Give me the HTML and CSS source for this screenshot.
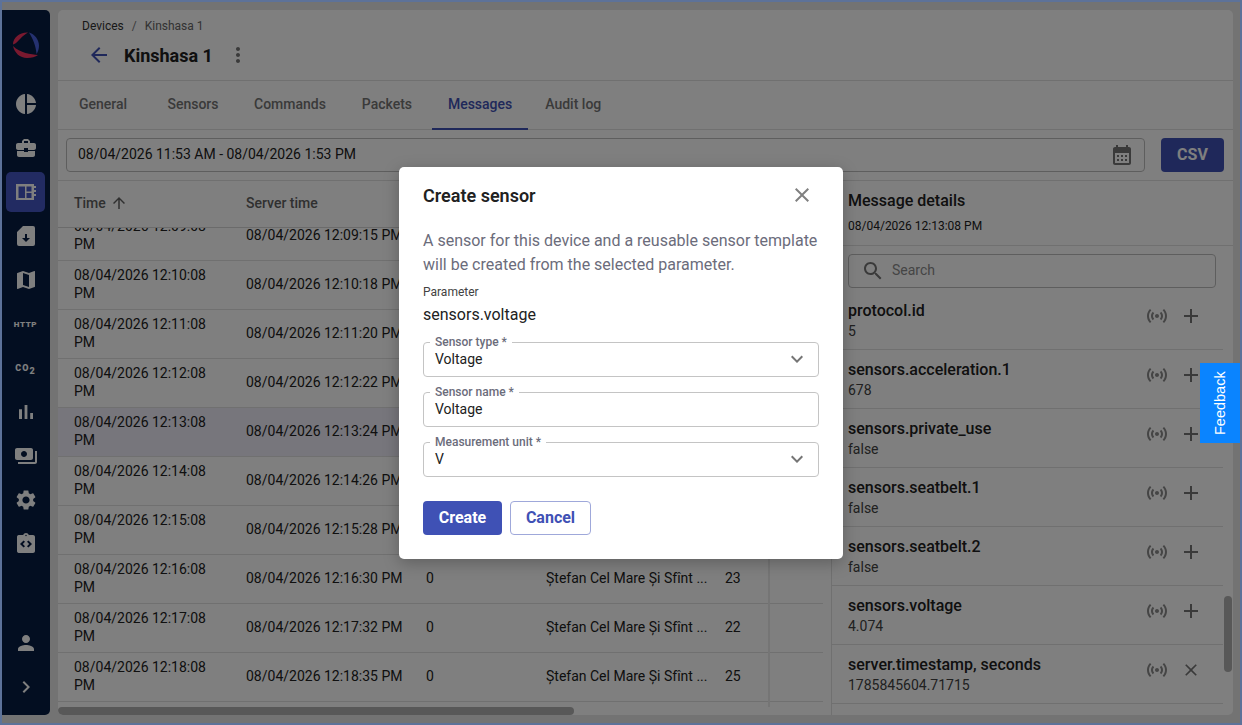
FILE: index.html
```html
<!DOCTYPE html>
<html lang="en">
<head>
  <meta charset="UTF-8">
  <meta name="viewport" content="width=device-width, initial-scale=1.0">
  <title>Kinshasa 1 - Messages</title>
  <link rel="stylesheet" href="styles.css">
</head>
<body>
  <svg class="icon-defs" aria-hidden="true">
    <symbol id="i-pie" viewBox="0 0 24 24"><path d="M11 2v20c-5.07-.5-9-4.79-9-10s3.93-9.5 9-10zm2.03 0v8.99H22c-.47-4.74-4.24-8.52-8.97-8.99zm0 11.01V22c4.74-.47 8.5-4.25 8.97-8.99h-8.97z"/></symbol>
    <symbol id="i-case" viewBox="0 0 24 24"><path d="M10 16v-1H3.01L3 19c0 1.11.89 2 2 2h14c1.11 0 2-.89 2-2v-4h-7v1h-4zm10-9h-4.01V5l-2-2h-4l-2 2v2H4c-1.1 0-2 .9-2 2v3c0 1.11.89 2 2 2h6v-2h4v2h6c1.1 0 2-.9 2-2V9c0-1.1-.9-2-2-2zm-6 0h-4V5h4v2z"/></symbol>
    <symbol id="i-board" viewBox="0 0 24 24"><path fill-rule="evenodd" d="M2 4h18v2h2v2h-2v2h2v2h-2v2h2v2h-2v4H2zM4.500 6.500V18H11V6.500zm8 0v5h5v-5zm0 6.500v5h5v-5z"/></symbol>
    <symbol id="i-file" viewBox="0 0 24 24"><path fill-rule="evenodd" d="M9 2h10a2 2 0 0 1 2 2v16a2 2 0 0 1-2 2H5a2 2 0 0 1-2-2V8zm2 8v4H8l4 4 4-4h-3v-4z"/></symbol>
    <symbol id="i-map" viewBox="0 0 24 24"><path d="M20.500 3l-.16.03L15 5.100 9 3 3.360 4.900c-.21.07-.36.25-.36.48V20.500c0 .28.22.5.5.5l.16-.03L9 18.900l6 2.100 5.640-1.900c.21-.07.36-.25.36-.48V3.500c0-.28-.22-.5-.5-.5zM15 19l-6-2.110V5l6 2.110V19z"/></symbol>
    <symbol id="i-bars" viewBox="0 0 24 24"><path d="M5 9.200h3V19H5zM10.600 5h2.800v14h-2.800zm5.600 8H19v6h-2.800z"/></symbol>
    <symbol id="i-pay" viewBox="0 0 24 24"><path d="M19 14V6c0-1.100-.9-2-2-2H3c-1.100 0-2 .9-2 2v8c0 1.100.9 2 2 2h14c1.100 0 2-.9 2-2zm-9-1c-1.660 0-3-1.340-3-3s1.340-3 3-3 3 1.340 3 3-1.340 3-3 3zm13-6v11c0 1.100-.9 2-2 2H4v-2h17V7h2z"/></symbol>
    <symbol id="i-gear" viewBox="0 0 24 24"><path d="M19.140 12.940c.04-.3.06-.61.06-.94 0-.32-.02-.64-.07-.94l2.030-1.580c.18-.14.23-.41.12-.61l-1.920-3.320c-.12-.22-.37-.29-.59-.22l-2.390.96c-.5-.38-1.030-.7-1.620-.94l-.36-2.540c-.04-.24-.24-.41-.48-.41h-3.840c-.24 0-.43.17-.47.41l-.36 2.540c-.59.24-1.130.57-1.620.94l-2.390-.96c-.22-.08-.47 0-.59.22L2.740 8.870c-.12.21-.08.47.12.61l2.030 1.580c-.05.3-.09.63-.09.94s.02.64.07.94l-2.030 1.580c-.18.14-.23.41-.12.61l1.920 3.320c.12.22.37.29.59.22l2.390-.96c.5.38 1.030.7 1.620.94l.36 2.540c.05.24.24.41.48.41h3.840c.24 0 .44-.17.47-.41l.36-2.540c.59-.24 1.130-.56 1.620-.94l2.390.96c.22.08.47 0 .59-.22l1.920-3.320c.12-.22.07-.47-.12-.61l-2.010-1.580zM12 15.600c-1.980 0-3.600-1.620-3.600-3.600s1.620-3.600 3.600-3.600 3.600 1.620 3.600 3.600-1.620 3.600-3.600 3.600z"/></symbol>
    <symbol id="i-code" viewBox="0 0 24 24"><path d="M19 3h-4.180C14.400 1.840 13.300 1 12 1s-2.400.84-2.820 2H5c-.14 0-.27.01-.4.04-.39.08-.74.28-1.010.55-.18.18-.33.4-.43.64-.1.23-.16.49-.16.77v14c0 .27.06.54.16.78s.25.45.43.64c.27.27.62.47 1.010.55.13.02.26.03.4.03h14c1.100 0 2-.9 2-2V5c0-1.100-.9-2-2-2zm-8 11.170-1.410 1.420L6 12l3.590-3.590L11 9.830 8.830 12 11 14.170zm1-9.920c-.41 0-.75-.34-.75-.75s.34-.75.75-.75.75.34.75.75-.34.75-.75.75zm1 9.920L15.170 12 13 9.830l1.410-1.420L18 12l-3.590 3.590L13 14.170z"/></symbol>
    <symbol id="i-user" viewBox="0 0 24 24"><path d="M12 12c2.210 0 4-1.790 4-4s-1.790-4-4-4-4 1.790-4 4 1.790 4 4 4zm0 2c-2.670 0-8 1.340-8 4v2h16v-2c0-2.660-5.330-4-8-4z"/></symbol>
    <symbol id="i-right" viewBox="0 0 24 24"><path d="M10 6L8.590 7.410 13.170 12l-4.580 4.590L10 18l6-6z"/></symbol>
    <symbol id="i-back" viewBox="0 0 24 24"><path d="M20 11H7.830l5.590-5.590L12 4l-8 8 8 8 1.410-1.410L7.830 13H20v-2z"/></symbol>
    <symbol id="i-more" viewBox="0 0 24 24"><path d="M12 8c1.100 0 2-.9 2-2s-.9-2-2-2-2 .9-2 2 .9 2 2 2zm0 2c-1.100 0-2 .9-2 2s.9 2 2 2 2-.9 2-2-.9-2-2-2zm0 6c-1.100 0-2 .9-2 2s.9 2 2 2 2-.9 2-2-.9-2-2-2z"/></symbol>
    <symbol id="i-up" viewBox="0 0 24 24"><path d="M4 12l1.410 1.410L11 7.830V20h2V7.830l5.580 5.590L20 12l-8-8-8 8z"/></symbol>
    <symbol id="i-cal" viewBox="0 0 24 24"><path d="M19 4h-1V2h-2v2H8V2H6v2H5c-1.100 0-2 .9-2 2v14c0 1.100.9 2 2 2h14c1.100 0 2-.9 2-2V6c0-1.100-.9-2-2-2zm0 16H5V10h14v10zM9 14H7v-2h2v2zm4 0h-2v-2h2v2zm4 0h-2v-2h2v2zm-8 4H7v-2h2v2zm4 0h-2v-2h2v2zm4 0h-2v-2h2v2z"/></symbol>
    <symbol id="i-close" viewBox="0 0 24 24"><path d="M19 6.410L17.590 5 12 10.590 6.410 5 5 6.410 10.590 12 5 17.590 6.410 19 12 13.410 17.590 19 19 17.590 13.410 12z"/></symbol>
    <symbol id="i-plus" viewBox="0 0 24 24"><path d="M19 13h-6v6h-2v-6H5v-2h6V5h2v6h6v2z"/></symbol>
    <symbol id="i-search" viewBox="0 0 24 24"><path d="M15.500 14h-.79l-.28-.27C15.410 12.590 16 11.110 16 9.500 16 5.910 13.090 3 9.500 3S3 5.910 3 9.500 5.910 16 9.500 16c1.610 0 3.090-.59 4.230-1.570l.27.28v.79l5 4.990L20.490 19l-4.990-5zm-6 0C7.010 14 5 11.990 5 9.500S7.010 5 9.500 5 14 7.010 14 9.500 11.990 14 9.500 14z"/></symbol>
    <symbol id="i-signal" viewBox="0 0 24 24"><path d="M7.760 16.240C6.670 15.160 6 13.660 6 12s.67-3.160 1.760-4.240l1.420 1.420C8.450 9.900 8 10.900 8 12c0 1.100.45 2.100 1.170 2.830l-1.410 1.410zm8.480 0C17.330 15.160 18 13.660 18 12s-.67-3.160-1.760-4.240l-1.420 1.420C15.550 9.900 16 10.900 16 12c0 1.100-.45 2.100-1.170 2.830l1.410 1.410zM12 10c-1.100 0-2 .9-2 2s.9 2 2 2 2-.9 2-2-.9-2-2-2zm8 2c0 2.210-.9 4.210-2.350 5.650l1.420 1.420C20.880 17.260 22 14.760 22 12s-1.120-5.260-2.930-7.070l-1.420 1.420C19.100 7.790 20 9.790 20 12zM6.350 6.350L4.930 4.930C3.120 6.740 2 9.240 2 12s1.120 5.260 2.930 7.070l1.420-1.420C4.900 16.210 4 14.210 4 12s.9-4.210 2.350-5.650z"/></symbol>
    <symbol id="i-down" viewBox="0 0 24 24"><path d="M16.590 8.590L12 13.170 7.410 8.590 6 10l6 6 6-6z"/></symbol>
  </svg>

  <div class="app">
    <nav class="sidebar">
      <div class="logo">
        <svg width="28" height="28" viewBox="0 0 28 28">
          <path class="logo-red" d="M16 1.500C8 1 1 6.500 1 13.500c3.500-1 5-3.500 7.500-6 2-2.500 5-4.500 7.500-6z"/>
          <path class="logo-red" d="M1 15c1.500 7 7 12 14 12 4.500 0 8.500-1 11-3-7-.5-18-2-25-9z"/>
          <path class="logo-blue" d="M17 1.500c5.500 1.500 10 7 10 13 0 3.500-1 6.500-2.500 8.500-.5-8-3.500-15-7.500-21.500z"/>
        </svg>
      </div>
      <a class="nav-item"><svg class="icon"><use href="#i-pie"/></svg></a>
      <a class="nav-item"><svg class="icon"><use href="#i-case"/></svg></a>
      <a class="nav-item active"><svg class="icon"><use href="#i-board"/></svg></a>
      <a class="nav-item"><svg class="icon"><use href="#i-file"/></svg></a>
      <a class="nav-item"><svg class="icon"><use href="#i-map"/></svg></a>
      <a class="nav-item nav-text">HTTP</a>
      <a class="nav-item nav-text co2"><span>CO<sub>2</sub></span></a>
      <a class="nav-item"><svg class="icon"><use href="#i-bars"/></svg></a>
      <a class="nav-item"><svg class="icon"><use href="#i-pay"/></svg></a>
      <a class="nav-item"><svg class="icon"><use href="#i-gear"/></svg></a>
      <a class="nav-item"><svg class="icon"><use href="#i-code"/></svg></a>
      <a class="nav-item push"><svg class="icon"><use href="#i-user"/></svg></a>
      <a class="nav-item"><svg class="icon"><use href="#i-right"/></svg></a>
    </nav>

    <main class="panel">
      <header class="page-head">
        <div class="crumbs"><span>Devices</span><i>/</i><span class="crumb-last">Kinshasa 1</span></div>
        <div class="title-row">
          <svg class="icon back"><use href="#i-back"/></svg>
          <h1>Kinshasa 1</h1>
          <svg class="icon more"><use href="#i-more"/></svg>
        </div>
      </header>

      <div class="tabs">
        <a class="tab">General</a>
        <a class="tab">Sensors</a>
        <a class="tab">Commands</a>
        <a class="tab">Packets</a>
        <a class="tab current">Messages</a>
        <a class="tab">Audit log</a>
      </div>

      <div class="filter-row">
        <div class="date-input">
          <span>08/04/2026 11:53 AM - 08/04/2026 1:53 PM</span>
          <svg class="icon"><use href="#i-cal"/></svg>
        </div>
        <button class="csv-btn">CSV</button>
      </div>

      <div class="content">
        <section class="table-pane">
          <div class="row table-head">
            <div class="cell">Time <svg class="sort"><use href="#i-up"/></svg></div>
            <div class="cell">Server time</div>
          </div>
          <div class="table-body">
            <div class="row first"><div class="cell">08/04/2026 12:09:08 PM</div><div class="cell">08/04/2026 12:09:15 PM</div></div>
            <div class="row"><div class="cell">08/04/2026 12:10:08 PM</div><div class="cell">08/04/2026 12:10:18 PM</div></div>
            <div class="row"><div class="cell">08/04/2026 12:11:08 PM</div><div class="cell">08/04/2026 12:11:20 PM</div></div>
            <div class="row"><div class="cell">08/04/2026 12:12:08 PM</div><div class="cell">08/04/2026 12:12:22 PM</div></div>
            <div class="row selected"><div class="cell">08/04/2026 12:13:08 PM</div><div class="cell">08/04/2026 12:13:24 PM</div></div>
            <div class="row"><div class="cell">08/04/2026 12:14:08 PM</div><div class="cell">08/04/2026 12:14:26 PM</div></div>
            <div class="row"><div class="cell">08/04/2026 12:15:08 PM</div><div class="cell">08/04/2026 12:15:28 PM</div></div>
            <div class="row"><div class="cell">08/04/2026 12:16:08 PM</div><div class="cell">08/04/2026 12:16:30 PM</div><div class="cell">0</div><div class="cell clip">Ștefan Cel Mare Și Sfînt ...</div><div class="cell">23</div></div>
            <div class="row"><div class="cell">08/04/2026 12:17:08 PM</div><div class="cell">08/04/2026 12:17:32 PM</div><div class="cell">0</div><div class="cell clip">Ștefan Cel Mare Și Sfînt ...</div><div class="cell">22</div></div>
            <div class="row"><div class="cell">08/04/2026 12:18:08 PM</div><div class="cell">08/04/2026 12:18:35 PM</div><div class="cell">0</div><div class="cell clip">Ștefan Cel Mare Și Sfînt ...</div><div class="cell">25</div></div>
          </div>
          <div class="col-line"></div>
          <div class="thumb-h"></div>
        </section>

        <aside class="details">
          <div class="details-head">
            <h2>Message details</h2>
            <div class="details-date">08/04/2026 12:13:08 PM</div>
          </div>
          <div class="search">
            <svg class="icon"><use href="#i-search"/></svg>
            <span>Search</span>
          </div>
          <div class="param-list">
            <div class="param"><div class="param-text"><b>protocol.id</b><span>5</span></div><svg class="icon"><use href="#i-signal"/></svg><svg class="icon"><use href="#i-plus"/></svg></div>
            <div class="param"><div class="param-text"><b>sensors.acceleration.1</b><span>678</span></div><svg class="icon"><use href="#i-signal"/></svg><svg class="icon"><use href="#i-plus"/></svg></div>
            <div class="param"><div class="param-text"><b>sensors.private_use</b><span>false</span></div><svg class="icon"><use href="#i-signal"/></svg><svg class="icon"><use href="#i-plus"/></svg></div>
            <div class="param"><div class="param-text"><b>sensors.seatbelt.1</b><span>false</span></div><svg class="icon"><use href="#i-signal"/></svg><svg class="icon"><use href="#i-plus"/></svg></div>
            <div class="param"><div class="param-text"><b>sensors.seatbelt.2</b><span>false</span></div><svg class="icon"><use href="#i-signal"/></svg><svg class="icon"><use href="#i-plus"/></svg></div>
            <div class="param"><div class="param-text"><b>sensors.voltage</b><span>4.074</span></div><svg class="icon"><use href="#i-signal"/></svg><svg class="icon"><use href="#i-plus"/></svg></div>
            <div class="param"><div class="param-text"><b>server.timestamp, seconds</b><span>1785845604.71715</span></div><svg class="icon"><use href="#i-signal"/></svg><svg class="icon remove"><use href="#i-close"/></svg></div>
          </div>
          <div class="thumb-v"></div>
        </aside>
      </div>
    </main>

    <div class="overlay">
      <div class="modal">
        <div class="modal-head">
          <h3>Create sensor</h3>
          <svg class="icon"><use href="#i-close"/></svg>
        </div>
        <p class="modal-desc">A sensor for this device and a reusable sensor template will be created from the selected parameter.</p>
        <div class="param-label">Parameter</div>
        <div class="param-value">sensors.voltage</div>
        <fieldset class="field">
          <legend>Sensor type *</legend>
          <div class="field-row"><span>Voltage</span><svg class="icon"><use href="#i-down"/></svg></div>
        </fieldset>
        <fieldset class="field">
          <legend>Sensor name *</legend>
          <div class="field-row"><span>Voltage</span></div>
        </fieldset>
        <fieldset class="field">
          <legend>Measurement unit *</legend>
          <div class="field-row"><span>V</span><svg class="icon"><use href="#i-down"/></svg></div>
        </fieldset>
        <div class="modal-actions">
          <button class="btn primary">Create</button>
          <button class="btn outline">Cancel</button>
        </div>
      </div>
    </div>

    <button class="feedback">Feedback</button>
  </div>
</body>
</html>
```

FILE: styles.css
```css
* {
  box-sizing: border-box;
}
html, body {
  margin: 0;
  padding: 0;
  height: 100%;
  overflow: hidden;
}
body {
  font-family: Roboto, "Liberation Sans", sans-serif;
  font-size: 14px;
  color: #212121;
}
.icon-defs {
  display: none;
}
.icon {
  width: 24px;
  height: 24px;
  flex: none;
  fill: currentColor;
}

/* shell */
.app {
  position: relative;
  display: flex;
  gap: 8px;
  height: 725px;
  padding: 8px 7px 8px 0;
  border: 2px solid #5d7299;
  background-color: #e6e6e6;
}
.sidebar {
  width: 48px;
  flex: none;
  display: flex;
  flex-direction: column;
  gap: 4px;
  padding: 0 5px 8px 4px;
  background-color: #061c42;
  border-radius: 0 5px 5px 0;
  color: #fff;
}
.logo {
  height: 70px;
  display: flex;
  align-items: center;
  justify-content: center;
}
.logo-red {
  fill: #f5335f;
}
.logo-blue {
  fill: #4a62e0;
}
.nav-item {
  height: 40px;
  flex: none;
  display: flex;
  align-items: center;
  justify-content: center;
  border-radius: 5px;
}
.nav-item.active {
  background-color: #4557c4;
}
.nav-item.push {
  margin-top: auto;
}
.nav-text {
  font-size: 8px;
  font-weight: 900;
  letter-spacing: 0.6px;
}
.nav-text.co2 {
  font-size: 9px;
  letter-spacing: 1px;
}
.nav-text sub {
  font-size: 9px;
  line-height: 0;
}

/* main panel */
.panel {
  flex: 1;
  min-width: 0;
  display: flex;
  flex-direction: column;
  background-color: #fff;
  border-radius: 5px;
  overflow: hidden;
}
.page-head {
  height: 71px;
  flex: none;
  padding: 9px 0 0 24px;
  border-bottom: 1px solid #e0e0e0;
}
.crumbs {
  display: flex;
  gap: 8px;
  font-size: 12px;
  line-height: 14px;
  color: #333;
}
.crumbs i {
  font-style: normal;
  color: #777;
}
.crumb-last {
  color: #666;
}
.title-row {
  display: flex;
  align-items: center;
  margin-top: 6px;
  height: 32px;
}
.back {
  margin-left: 5px;
  color: #3f51b5;
}
.title-row h1 {
  margin: 0 13px 0 13px;
  font-size: 18px;
  font-weight: 700;
  color: #212121;
}
.more {
  color: #757575;
}
.tabs {
  height: 49px;
  flex: none;
  display: flex;
  border-bottom: 1px solid #e0e0e0;
}
.tab {
  min-width: 90px;
  padding: 0 16px 2px;
  display: flex;
  align-items: center;
  justify-content: center;
  font-weight: 500;
  color: #757575;
  margin-bottom: -1px;
  border-bottom: 2px solid transparent;
}
.tab.current {
  color: #3f51b5;
  border-bottom-color: #3f51b5;
}
.filter-row {
  height: 51px;
  flex: none;
  display: flex;
  gap: 16px;
  padding: 8px 9px 8px 8px;
  border-bottom: 1px solid #e0e0e0;
}
.date-input {
  flex: 1;
  display: flex;
  align-items: center;
  justify-content: space-between;
  padding: 0 10px 0 11px;
  border: 1px solid #bdbdbd;
  border-radius: 4px;
}
.date-input span {
  margin-bottom: 2px;
}
.date-input .icon {
  color: #757575;
}
.csv-btn {
  width: 63px;
  padding: 0 0 2px;
  border: none;
  border-radius: 4px;
  background-color: #3f51b5;
  color: #fff;
  font: 700 16px Roboto, sans-serif;
}

/* messages table */
.content {
  flex: 1;
  min-height: 0;
  display: flex;
}
.table-pane {
  position: relative;
  width: 774px;
  flex: none;
  display: flex;
  flex-direction: column;
  border-right: 1px solid #e0e0e0;
  overflow: hidden;
}
.row {
  display: grid;
  grid-template-columns: 172px 180px 120px 179px 60px;
  align-items: center;
  width: 765px;
  height: 49px;
  flex: none;
  padding-bottom: 2px;
  border-bottom: 1px solid #e0e0e0;
  line-height: 18.4px;
}
.cell {
  padding: 0 16px;
}
.cell:first-child {
  padding-right: 20px;
}
.cell:nth-child(2) {
  padding-right: 0;
  white-space: nowrap;
}
.cell.clip {
  padding-right: 0;
  white-space: nowrap;
}
.table-head {
  width: 100%;
  height: 47px;
  font-weight: 500;
  color: #616161;
  border-bottom: 1px solid #d6d6d6;
}
.table-head .cell {
  display: flex;
  align-items: center;
  gap: 4px;
}
.sort {
  width: 18px;
  height: 18px;
  fill: currentColor;
}
.table-body {
  flex: 1;
  min-height: 0;
  overflow: hidden;
}
.row.first {
  margin-top: -16px;
}
.row.selected {
  background-color: #eeecf8;
}
.col-line {
  position: absolute;
  left: 710px;
  top: 47px;
  bottom: 8px;
  width: 2px;
  background-color: #eaeaea;
}
.thumb-h {
  position: absolute;
  left: 0;
  bottom: 0;
  width: 516px;
  height: 8px;
  border-radius: 4px;
  background-color: #b0b0b0;
}

/* details */
.details {
  position: relative;
  flex: 1;
  min-width: 0;
  overflow: hidden;
}
.details-head {
  height: 65px;
  padding: 10px 16px 0;
  border-bottom: 1px solid #e0e0e0;
}
.details-head h2 {
  margin: 0;
  font-size: 16px;
  font-weight: 500;
  line-height: 20px;
}
.details-date {
  margin-top: 8px;
  font-size: 12px;
  line-height: 14px;
}
.search {
  display: flex;
  align-items: center;
  gap: 7px;
  height: 34px;
  margin: 8px 16px 0;
  width: 368px;
  padding: 0 12px 2px;
  border: 1px solid #bdbdbd;
  border-radius: 4px;
  color: #8a8a8a;
}
.search .icon {
  color: #757575;
  margin-bottom: -2px;
}
.param-list {
  width: 391px;
  margin-top: 3px;
}
.param {
  height: 59px;
  display: flex;
  gap: 10px;
  padding: 9px 20px 0 16px;
  border-bottom: 1px solid #e0e0e0;
}
.param .icon {
  margin-top: 4px;
  color: #8a8a8a;
}
.param .icon:last-child {
  color: #757575;
}
.param .icon.remove {
  width: 20px;
  height: 20px;
  margin: 6px 2px 0;
}
.param-text {
  flex: 1;
  min-width: 0;
}
.param-text b {
  display: block;
  font-size: 16px;
  font-weight: 500;
  line-height: 21px;
}
.param-text span {
  display: block;
  line-height: 20px;
  color: #424242;
}
.thumb-v {
  position: absolute;
  right: 1px;
  top: 415px;
  width: 8px;
  height: 76px;
  border-radius: 4px;
  background-color: #b0b0b0;
}

/* dialog */
.overlay {
  position: absolute;
  inset: 0;
  display: flex;
  align-items: center;
  justify-content: center;
  padding-top: 1px;
  background-color: rgba(0, 0, 0, 0.5);
}
.modal {
  width: 444px;
  padding: 0 24px 24px;
  background-color: #fff;
  border-radius: 5px;
  box-shadow: 0 4px 16px rgba(0, 0, 0, 0.25);
}
.modal-head {
  height: 56px;
  display: flex;
  align-items: center;
  justify-content: space-between;
  color: #808080;
  padding-right: 5px;
}
.modal-head h3 {
  margin: 0;
  font-size: 18px;
  font-weight: 600;
  color: #212121;
}
.modal-desc {
  margin: 6px 0 8px;
  font-size: 16px;
  line-height: 24px;
  color: #6b6c7b;
}
.param-label {
  font-size: 12px;
  line-height: 14px;
  color: #424242;
}
.param-value {
  margin-top: 6px;
  font-size: 16px;
  line-height: 20px;
  color: #212121;
}
.field {
  height: 41px;
  min-width: 0;
  margin: 9px 0 0;
  padding: 0 11px;
  border: 1px solid #c4c4c4;
  border-radius: 4px;
}
.param-value + .field {
  margin-top: 11px;
}
.field legend {
  margin-left: -5px;
  padding: 0 5px;
  font-size: 12px;
  font-weight: 500;
  line-height: 13px;
  color: #6b6c7b;
}
.field-row {
  display: flex;
  align-items: center;
  justify-content: space-between;
  height: 18px;
  margin-top: 1px;
  color: #212121;
}
.field-row .icon {
  margin-right: -2px;
  color: #757575;
}
.modal-actions {
  display: flex;
  gap: 8px;
  margin-top: 24px;
}
.btn {
  height: 34px;
  padding: 0 0 2px;
  border-radius: 4px;
  font: 700 16px Roboto, sans-serif;
}
.btn.primary {
  width: 79px;
  border: none;
  background-color: #3f51b5;
  color: #fff;
}
.btn.outline {
  width: 81px;
  border: 1px solid #9fa8da;
  background-color: #fff;
  color: #3f51b5;
}

.feedback {
  position: absolute;
  right: 0;
  top: 361px;
  width: 40px;
  height: 80px;
  padding: 0;
  border: none;
  background-color: #0a84ff;
  color: #fff;
  font: 400 14.5px "Liberation Sans", sans-serif;
  writing-mode: vertical-rl;
  transform: rotate(180deg);
  text-align: center;
}
```
